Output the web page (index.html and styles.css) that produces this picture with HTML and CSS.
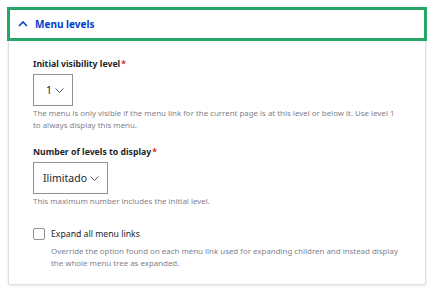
FILE: index.html
```html
<!DOCTYPE html>
<html lang="en">
<head>
    <meta charset="UTF-8">
    <title>Menu levels</title>
    <link rel="stylesheet" href="styles.css">
</head>
<body>
    <details class="details" open>
        <summary class="details-summary">
            <svg class="chevron" width="10" height="6" viewBox="0 0 10 6"><path d="M1 5 L5 1 L9 5" fill="none" stroke="#003ecc" stroke-width="1.6"/></svg>
            Menu levels
        </summary>
        <div class="details-body">
            <!-- Initial level -->
            <div class="form-item">
                <label class="form-label">Initial visibility level<span class="req">*</span></label>
                <div class="select select-small">1<svg width="9" height="5" viewBox="0 0 9 5"><path d="M0.5 0.5 L4.5 4.5 L8.5 0.5" fill="none" stroke="#545560" stroke-width="1"/></svg></div>
                <div class="description">The menu is only visible if the menu link for the current page is at this level or below it. Use level 1 to always display this menu.</div>
            </div>

            <!-- Depth -->
            <div class="form-item">
                <label class="form-label">Number of levels to display<span class="req">*</span></label>
                <div class="select">Ilimitado<svg width="9" height="5" viewBox="0 0 9 5"><path d="M0.5 0.5 L4.5 4.5 L8.5 0.5" fill="none" stroke="#545560" stroke-width="1"/></svg></div>
                <div class="description">This maximum number includes the initial level.</div>
            </div>

            <!-- Expand -->
            <div class="form-item checkbox-item">
                <div class="checkbox-row">
                    <span class="checkbox"></span>
                    <label class="checkbox-label">Expand all menu links</label>
                </div>
                <div class="description indent">Override the option found on each menu link used for expanding children and instead display the whole menu tree as expanded.</div>
            </div>
        </div>
    </details>
</body>
</html>
```

FILE: styles.css
```css
body {
    margin: 0;
    padding: 8px;
    background-color: #fff;
    font-family: "Noto Sans", "Open Sans", sans-serif;
    color: #232429;
}
.details {
    width: 418px;
    box-sizing: border-box;
    border: 1px solid #dedfe4;
    border-radius: 2px;
    box-shadow: 0 1px 3px rgba(0, 0, 0, 0.1);
    background-color: #fff;
}
.details-summary {
    list-style: none;
    display: flex;
    align-items: center;
    gap: 7px;
    height: 34px;
    margin: -2px -2px 0 -2px;
    padding-left: 11px;
    box-shadow: inset 0 0 0 3px #26a769;
    color: #003ecc;
    font-weight: 700;
    font-size: 10px;
}
.details-summary::-webkit-details-marker {
    display: none;
}
.details-body {
    padding: 17px 24px 15px 24px;
}
.form-item {
    margin-bottom: 15px;
}
.form-item:last-child {
    margin-bottom: 0;
}
.form-label {
    display: block;
    font-weight: 700;
    font-size: 8.7px;
    margin-bottom: 4px;
}
.req {
    color: #dc2323;
    margin-left: 1px;
}
.select {
    display: inline-flex;
    align-items: center;
    gap: 3px;
    height: 32px;
    box-sizing: border-box;
    padding: 0 8px 0 9px;
    border: 1px solid #919297;
    font-size: 10.5px;
    color: #232429;
}
.select-small {
    padding: 0 8px 0 12px;
}
.description {
    margin-top: 1px;
    font-size: 7.9px;
    line-height: 12px;
    color: #82828c;
}
.checkbox-item {
    padding-top: 6px;
}
.checkbox-row {
    display: flex;
    align-items: center;
    gap: 6px;
}
.checkbox {
    width: 12px;
    height: 12px;
    box-sizing: border-box;
    border: 1px solid #919297;
    border-radius: 2px;
}
.checkbox-label {
    font-size: 8.7px;
}
.indent {
    margin-top: 5px;
    margin-left: 18px;
}
```
